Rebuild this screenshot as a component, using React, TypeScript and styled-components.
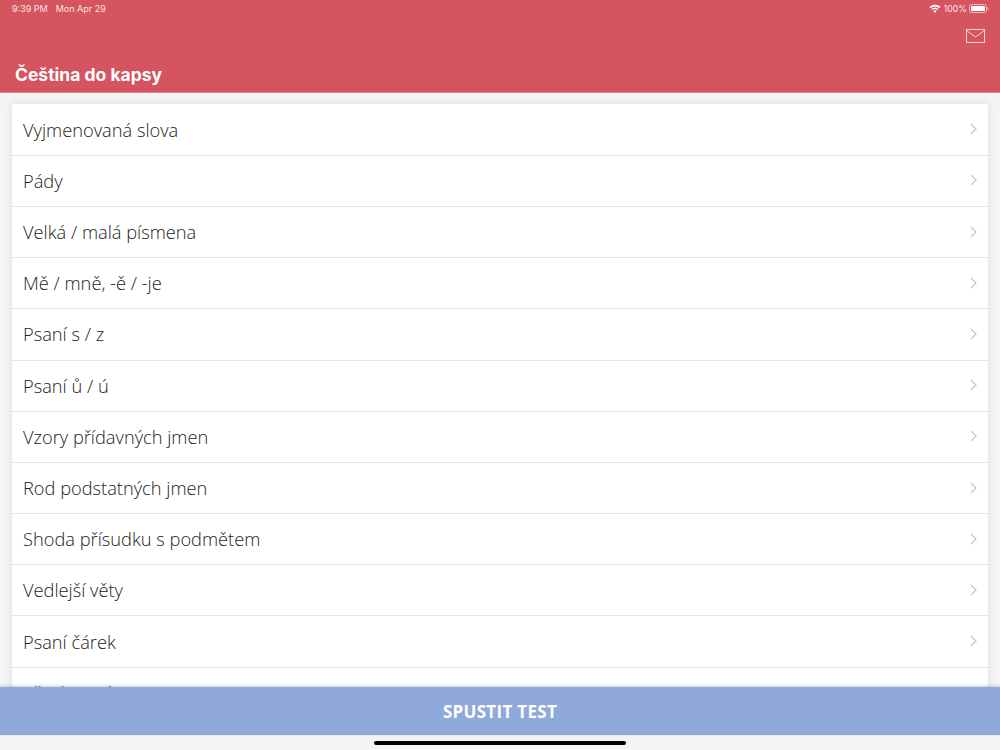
import { FC } from 'react';
import styled, { createGlobalStyle } from 'styled-components';

const GlobalStyle = createGlobalStyle`
  html, body {
    margin: 0;
    padding: 0;
    background: #f4f4f4;
  }
`;

const Screen = styled.div`
  position: relative;
  width: 1000px;
  height: 750px;
  overflow: hidden;
  display: flex;
  flex-direction: column;
  background: #f4f4f4;
`;

const Header = styled.header`
  height: 93px;
  flex: none;
  box-sizing: border-box;
  background: #d6545f;
  border-bottom: 1px solid #e08a90;
  display: flex;
  flex-direction: column;
  color: #fff;
`;

const StatusBar = styled.div`
  height: 17px;
  padding: 0 11px 0 12px;
  display: flex;
  align-items: center;
  justify-content: space-between;
  font: 400 9px Inter, Roboto, sans-serif;
  color: #fbe4e6;
`;

const StatusGroup = styled.div`
  display: flex;
  align-items: center;
  gap: 8px;
`;

const StatusRight = styled(StatusGroup)`
  gap: 2px;
`;

const Percent = styled.span`
  margin: 0 0 0 1px;
  font-size: 8.8px;
`;

const Actions = styled.div`
  display: flex;
  justify-content: flex-end;
  padding: 12px 14px 0 0;
  height: 16px;
`;

const Title = styled.h1`
  margin: 19px 0 0 15px;
  font: 700 17.5px/22px Inter, Roboto, sans-serif;
  color: #fff;
`;

const Main = styled.main`
  flex: 1;
  min-height: 0;
  padding: 11px 12px 0;
  overflow: hidden;
`;

const List = styled.ul`
  margin: 0;
  padding: 0.6px 0 0;
  list-style: none;
  background: #fff;
  box-shadow: 0 0 8px rgba(0, 0, 0, 0.1);
`;

const Row = styled.li`
  box-sizing: border-box;
  height: 51.2px;
  padding: 0 11px 1px;
  display: flex;
  align-items: center;
  justify-content: space-between;
  border-bottom: 1px solid #e6e6e6;
  font: 300 18.25px "Open Sans", sans-serif;
  color: #222;
`;

const Footer = styled.footer`
  flex: none;
  height: 63px;
  display: flex;
  flex-direction: column;
  z-index: 1;
`;

const StartButton = styled.button`
  height: 48px;
  flex: none;
  border: none;
  padding: 0;
  background: #8fa9da;
  box-shadow: 0 -1px 3px rgba(70, 90, 130, 0.3);
  color: #fff;
  font: 700 17px "Open Sans", sans-serif;
  letter-spacing: 0.3px;
`;

const HomeBar = styled.div`
  position: absolute;
  left: 374px;
  bottom: 5px;
  width: 252px;
  height: 4px;
  border-radius: 2px;
  background: #000;
  z-index: 2;
`;

const Chevron: FC = () => (
  <svg width="7" height="12" viewBox="0 0 7 12" fill="none" stroke="#c8c8cc" strokeWidth="1.3">
    <path d="M1 1l5 5-5 5" />
  </svg>
);

const Mail: FC = () => (
  <svg width="20" height="15" viewBox="0 0 20 15" fill="none" stroke="#f6d5d8" strokeWidth="1">
    <rect x="0.5" y="0.5" width="18" height="13" />
    <path d="M0.5 1.5l9 6.5 9-6.5" />
  </svg>
);

const Wifi: FC = () => (
  <svg width="12" height="9" viewBox="0 0 12 9" fill="#fff">
    <path d="M6 9L4.3 7a2.6 2.6 0 0 1 3.4 0z" />
    <path d="M3.5 6.1l-1-1.1a5.3 5.3 0 0 1 7 0l-1 1.1a3.9 3.9 0 0 0-5 0z" />
    <path d="M1.7 4.2L.5 3a8 8 0 0 1 11 0l-1.2 1.2a6.4 6.4 0 0 0-8.6 0z" />
  </svg>
);

const Battery: FC = () => (
  <svg width="20" height="9" viewBox="0 0 20 9">
    <rect x="0.5" y="0.5" width="17" height="8" rx="2" fill="none" stroke="#f0b5ba" />
    <rect x="2" y="2" width="14" height="5" rx="1" fill="#fff" />
    <path d="M18.5 3v3c.6-.2 1-.8 1-1.5s-.4-1.3-1-1.5z" fill="#f0b5ba" />
  </svg>
);

const topics: string[] = [
  'Vyjmenovaná slova',
  'Pády',
  'Velká / malá písmena',
  'Mě / mně, -ě / -je',
  'Psaní s / z',
  'Psaní ů / ú',
  'Vzory přídavných jmen',
  'Rod podstatných jmen',
  'Shoda přísudku s podmětem',
  'Vedlejší věty',
  'Psaní čárek',
  // placeholder: the real label is hidden behind the button in the reference, only a few pixels show
  'Všechna témata',
];

const App: FC = () => (
  <Screen>
    <GlobalStyle />
    <Header>
      <StatusBar>
        <StatusGroup>
          <span>9:39 PM</span>
          <span>Mon Apr 29</span>
        </StatusGroup>
        <StatusRight>
          <Wifi />
          <Percent>100%</Percent>
          <Battery />
        </StatusRight>
      </StatusBar>
      <Actions>
        <Mail />
      </Actions>
      <Title>Čeština do kapsy</Title>
    </Header>
    <Main>
      <List>
        {topics.map((topic) => (
          <Row key={topic}>
            {topic}
            <Chevron />
          </Row>
        ))}
      </List>
    </Main>
    <Footer>
      <StartButton>SPUSTIT TEST</StartButton>
    </Footer>
    <HomeBar />
  </Screen>
);

export default App;
